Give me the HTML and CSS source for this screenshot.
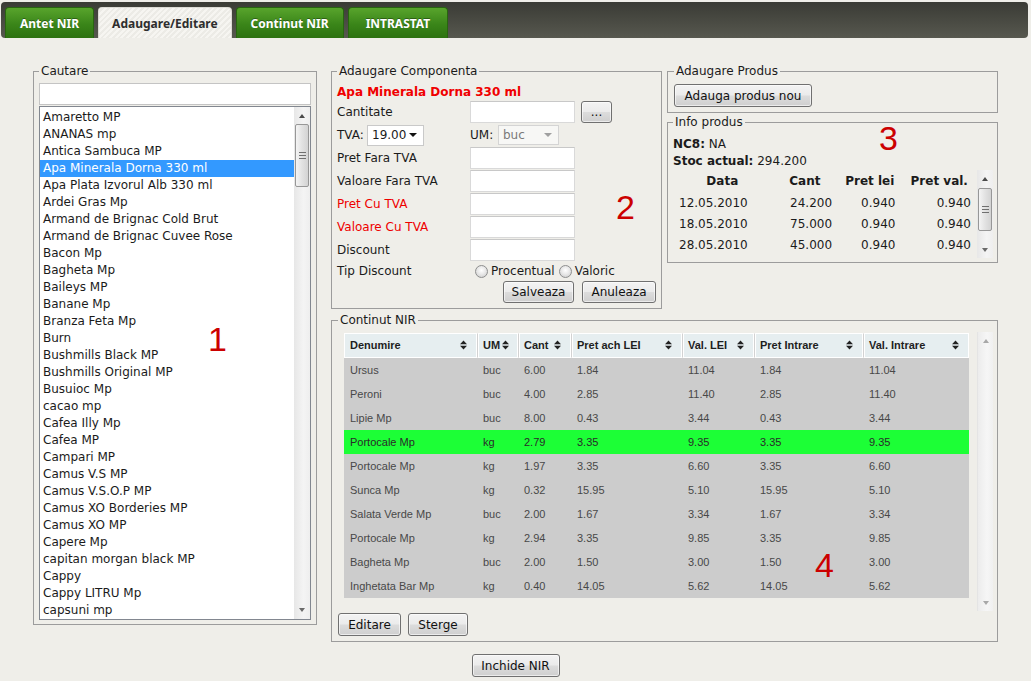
FILE: index.html
```html
<!DOCTYPE html>
<html lang="ro">
<head>
<meta charset="utf-8">
<title>NIR</title>
<link rel="stylesheet" href="styles.css">
</head>
<body>
<div class="tabbar">
  <div class="tab">Antet NIR</div>
  <div class="tab active">Adaugare/Editare</div>
  <div class="tab">Continut NIR</div>
  <div class="tab">INTRASTAT</div>
</div>

<div class="main">
  <fieldset class="box search">
    <legend>Cautare</legend>
    <div class="text search-input"></div>
    <div class="list">
      <ul class="items">
        <li>Amaretto MP</li>
        <li>ANANAS mp</li>
        <li>Antica Sambuca MP</li>
        <li class="sel">Apa Minerala Dorna 330 ml</li>
        <li>Apa Plata Izvorul Alb 330 ml</li>
        <li>Ardei Gras Mp</li>
        <li>Armand de Brignac Cold Brut</li>
        <li>Armand de Brignac Cuvee Rose</li>
        <li>Bacon Mp</li>
        <li>Bagheta Mp</li>
        <li>Baileys MP</li>
        <li>Banane Mp</li>
        <li>Branza Feta Mp</li>
        <li>Burn</li>
        <li>Bushmills Black MP</li>
        <li>Bushmills Original MP</li>
        <li>Busuioc Mp</li>
        <li>cacao mp</li>
        <li>Cafea Illy Mp</li>
        <li>Cafea MP</li>
        <li>Campari MP</li>
        <li>Camus V.S MP</li>
        <li>Camus V.S.O.P MP</li>
        <li>Camus XO Borderies MP</li>
        <li>Camus XO MP</li>
        <li>Capere Mp</li>
        <li>capitan morgan black MP</li>
        <li>Cappy</li>
        <li>Cappy LITRU Mp</li>
        <li>capsuni mp</li>
      </ul>
      <div class="vscroll list-scroll">
        <span class="sb-arrow up"></span>
        <span class="sb-thumb"><span class="grip"></span></span>
        <span class="sb-space"></span>
        <span class="sb-arrow down"></span>
      </div>
    </div>
  </fieldset>

  <div class="right">
    <div class="toprow">
      <fieldset class="box comp">
        <legend>Adaugare Componenta</legend>
        <div class="ftitle">Apa Minerala Dorna 330 ml</div>
        <div class="frow r-cant"><span class="flabel">Cantitate</span><span class="text field"></span><button class="btn btn-dots">...</button></div>
        <div class="frow r-tva">
          <span class="tva-label">TVA:</span>
          <span class="select tva-select">19.00<span class="caret"></span></span>
          <span class="um-label">UM:</span>
          <span class="select um-select">buc<span class="caret"></span></span>
        </div>
        <div class="frow"><span class="flabel">Pret Fara TVA</span><span class="text field"></span></div>
        <div class="frow"><span class="flabel">Valoare Fara TVA</span><span class="text field"></span></div>
        <div class="frow"><span class="flabel red">Pret Cu TVA</span><span class="text field"></span></div>
        <div class="frow"><span class="flabel red">Valoare Cu TVA</span><span class="text field"></span></div>
        <div class="frow"><span class="flabel">Discount</span><span class="text field"></span></div>
        <div class="frow r-tip">
          <span class="tip-label">Tip Discount</span>
          <span class="radio"></span><span class="rtext">Procentual</span>
          <span class="radio"></span><span class="rtext">Valoric</span>
        </div>
        <div class="frow r-btns">
          <button class="btn w-salv">Salveaza</button>
          <button class="btn w-anul">Anuleaza</button>
        </div>
      </fieldset>

      <div class="side">
        <fieldset class="box add">
          <legend>Adaugare Produs</legend>
          <button class="btn w-add">Adauga produs nou</button>
        </fieldset>
        <fieldset class="box info">
          <legend>Info produs</legend>
          <div class="iline"><b>NC8:</b> NA</div>
          <div class="iline"><b>Stoc actual:</b> 294.200</div>
          <div class="hist-wrap">
            <table class="hist">
              <colgroup><col class="h1"><col class="h2"><col class="h3"><col class="h4"></colgroup>
              <thead><tr><th>Data</th><th>Cant</th><th>Pret lei</th><th>Pret val.</th></tr></thead>
              <tbody>
                <tr><td>12.05.2010</td><td class="num">24.200</td><td class="num">0.940</td><td class="num">0.940</td></tr>
                <tr><td>18.05.2010</td><td class="num">75.000</td><td class="num">0.940</td><td class="num">0.940</td></tr>
                <tr><td>28.05.2010</td><td class="num">45.000</td><td class="num">0.940</td><td class="num">0.940</td></tr>
              </tbody>
            </table>
            <div class="vscroll hist-scroll">
              <span class="sb-arrow up"></span>
              <span class="sb-thumb"><span class="grip"></span></span>
              <span class="sb-space"></span>
              <span class="sb-arrow down"></span>
            </div>
          </div>
        </fieldset>
      </div>
    </div>

    <fieldset class="box nir">
      <legend>Continut NIR</legend>
      <div class="nir-area">
        <div class="grid-wrap">
          <table class="grid">
            <colgroup><col class="g1"><col class="g2"><col class="g3"><col class="g4"><col class="g5"><col class="g6"><col class="g7"></colgroup>
            <thead>
              <tr>
                <th><span>Denumire</span><svg class="sort" viewBox="0 0 7 10"><path d="M0 4.2 3.5 0.5 7 4.2Z M0 5.8 3.5 9.5 7 5.8Z"/></svg></th>
                <th class="th-um"><span>UM</span><svg class="sort" viewBox="0 0 7 10"><path d="M0 4.2 3.5 0.5 7 4.2Z M0 5.8 3.5 9.5 7 5.8Z"/></svg></th>
                <th><span>Cant</span><svg class="sort" viewBox="0 0 7 10"><path d="M0 4.2 3.5 0.5 7 4.2Z M0 5.8 3.5 9.5 7 5.8Z"/></svg></th>
                <th><span>Pret ach LEI</span><svg class="sort" viewBox="0 0 7 10"><path d="M0 4.2 3.5 0.5 7 4.2Z M0 5.8 3.5 9.5 7 5.8Z"/></svg></th>
                <th><span>Val. LEI</span><svg class="sort" viewBox="0 0 7 10"><path d="M0 4.2 3.5 0.5 7 4.2Z M0 5.8 3.5 9.5 7 5.8Z"/></svg></th>
                <th><span>Pret Intrare</span><svg class="sort" viewBox="0 0 7 10"><path d="M0 4.2 3.5 0.5 7 4.2Z M0 5.8 3.5 9.5 7 5.8Z"/></svg></th>
                <th><span>Val. Intrare</span><svg class="sort" viewBox="0 0 7 10"><path d="M0 4.2 3.5 0.5 7 4.2Z M0 5.8 3.5 9.5 7 5.8Z"/></svg></th>
              </tr>
            </thead>
            <tbody>
              <tr><td>Ursus</td><td>buc</td><td>6.00</td><td>1.84</td><td>11.04</td><td>1.84</td><td>11.04</td></tr>
              <tr><td>Peroni</td><td>buc</td><td>4.00</td><td>2.85</td><td>11.40</td><td>2.85</td><td>11.40</td></tr>
              <tr><td>Lipie Mp</td><td>buc</td><td>8.00</td><td>0.43</td><td>3.44</td><td>0.43</td><td>3.44</td></tr>
              <tr class="hl"><td>Portocale Mp</td><td>kg</td><td>2.79</td><td>3.35</td><td>9.35</td><td>3.35</td><td>9.35</td></tr>
              <tr><td>Portocale Mp</td><td>kg</td><td>1.97</td><td>3.35</td><td>6.60</td><td>3.35</td><td>6.60</td></tr>
              <tr><td>Sunca Mp</td><td>kg</td><td>0.32</td><td>15.95</td><td>5.10</td><td>15.95</td><td>5.10</td></tr>
              <tr><td>Salata Verde Mp</td><td>buc</td><td>2.00</td><td>1.67</td><td>3.34</td><td>1.67</td><td>3.34</td></tr>
              <tr><td>Portocale Mp</td><td>kg</td><td>2.94</td><td>3.35</td><td>9.85</td><td>3.35</td><td>9.85</td></tr>
              <tr><td>Bagheta Mp</td><td>buc</td><td>2.00</td><td>1.50</td><td>3.00</td><td>1.50</td><td>3.00</td></tr>
              <tr><td>Inghetata Bar Mp</td><td>kg</td><td>0.40</td><td>14.05</td><td>5.62</td><td>14.05</td><td>5.62</td></tr>
            </tbody>
          </table>
        </div>
        <div class="vscroll nir-scroll">
          <span class="sb-arrow up"></span>
          <span class="sb-space"></span>
          <span class="sb-arrow down"></span>
        </div>
      </div>
      <div class="nir-btns">
        <button class="btn w-edit">Editare</button>
        <button class="btn w-sterge">Sterge</button>
      </div>
    </fieldset>
  </div>
</div>

<div class="footer"><button class="btn w-close">Inchide NIR</button></div>

<span class="mark m1">1</span>
<span class="mark m2">2</span>
<span class="mark m3">3</span>
<span class="mark m4">4</span>
</body>
</html>
```

FILE: styles.css
```css
* { box-sizing: border-box; }

body {
  margin: 0;
  background: #efeee9;
  font-family: "DejaVu Sans", Verdana, sans-serif;
  font-size: 12px;
  color: #1b1b1b;
  position: relative;
  height: 681px;
  overflow: hidden;
}

/* ---------- tabs ---------- */
.tabbar {
  display: flex;
  align-items: flex-end;
  gap: 4px;
  height: 36px;
  margin: 2px 3px 0 1px;
  padding-left: 4px;
  background: linear-gradient(#3a3b35, #57584f);
  border-radius: 4px;
}
.tab {
  height: 31px;
  padding: 0 14px;
  display: flex;
  align-items: center;
  font-family: "Noto Sans", sans-serif;
  font-weight: bold;
  font-size: 12px;
  color: #fff;
  text-shadow: 0 -1px 0 rgba(0,0,0,.35);
  background: linear-gradient(#58a42c, #3a8519 55%, #2d7210);
  border: 1px solid #28650f;
  border-bottom: none;
  border-radius: 4px 4px 0 0;
}
.tab:last-child { padding: 0 17px; }
.tab.active {
  padding: 0 13px;
  color: #2e2e2e;
  text-shadow: none;
  background: repeating-linear-gradient(135deg, #f6f5f1 0 2px, #ecebe6 2px 4px);
  border-color: #dcdbd4;
}

/* ---------- layout ---------- */
.main {
  display: flex;
  align-items: flex-start;
  gap: 14px;
  padding: 26px 0 0 33px;
}
fieldset.box {
  margin: 0;
  min-width: 0;
  border: 1px solid #9c9c9c;
}
.box legend {
  padding: 0 2px;
  line-height: 14px;
  font-size: 12px;
  color: #1b1b1b;
}
.right {
  display: flex;
  flex-direction: column;
  width: 667px;
}
.toprow {
  display: flex;
  align-items: flex-start;
  gap: 5px;
}
.side {
  display: flex;
  flex-direction: column;
  gap: 2px;
  width: 331px;
}

/* ---------- inputs & buttons ---------- */
.text {
  display: block;
  background: #fff;
  border: 1px solid #d9d9d9;
  border-top-color: #c8c8c8;
}
.btn {
  height: 23px;
  padding: 0 6px;
  font-family: "DejaVu Sans", Verdana, sans-serif;
  font-size: 12px;
  color: #111;
  border: 1px solid #707070;
  border-radius: 3px;
  background: linear-gradient(#f3f3f3 0%, #ebebeb 48%, #dcdcdc 52%, #cfcfcf 100%);
  box-shadow: inset 0 0 0 1px rgba(255,255,255,.6);
}

/* ---------- search ---------- */
.search {
  width: 284px;
  padding: 5px 5px 4px 5px;
}
.search-input {
  height: 22px;
  margin-bottom: 1px;
  border-color: #c4c4c4;
}
.list {
  display: flex;
  height: 514px;
  border: 1px solid #828790;
  background: #fff;
}
.items {
  flex: 1;
  margin: 0;
  padding: 2px 0 0;
  list-style: none;
  overflow: hidden;
}
.items li {
  height: 17px;
  line-height: 17px;
  padding-left: 3px;
  white-space: nowrap;
  color: #1b1b1b;
}
.items li.sel {
  background: #3399ff;
  color: #fff;
}

/* ---------- scrollbars ---------- */
.vscroll {
  width: 16px;
  display: flex;
  flex-direction: column;
  background: linear-gradient(90deg, #e7e7e7, #f4f4f4 60%, #eeeeee);
}
.sb-arrow {
  height: 17px;
  flex: none;
  display: flex;
  align-items: center;
  justify-content: center;
}
.sb-arrow::before {
  content: "";
  border-left: 3px solid transparent;
  border-right: 3px solid transparent;
}
.sb-arrow.up::before { border-bottom: 4px solid #4a4a4a; }
.sb-arrow.down::before { border-top: 4px solid #6a6a6a; }
.sb-thumb {
  flex: none;
  margin: 0 1px;
  border: 1px solid #979797;
  border-radius: 2px;
  background: linear-gradient(90deg, #f4f4f4, #e2e2e2 50%, #d3d3d3);
  display: flex;
  align-items: center;
  justify-content: center;
}
.grip {
  width: 7px;
  height: 7px;
  background: repeating-linear-gradient(#6f6f6f 0 1px, transparent 1px 3px);
}
.sb-space { flex: 1; }
.list-scroll .sb-thumb { height: 63px; }
.list-scroll .sb-arrow.down { height: 19px; }

/* ---------- componenta ---------- */
.comp {
  width: 331px;
  padding: 6px 5px 5px 5px;
}
.ftitle {
  line-height: 16px;
  font-weight: bold;
  color: #f00000;
}
.frow {
  display: flex;
  align-items: center;
  height: 23px;
}
.flabel { width: 133px; }
.red { color: #ee0000; }
.field { width: 105px; height: 22px; }
.r-cant { height: 24px; }
.btn-dots {
  width: 31px;
  height: 22px;
  margin-left: 6px;
  padding: 0;
  line-height: 14px;
}
.r-tva { height: 22px; }
.tva-label { width: 30px; }
.select {
  display: flex;
  align-items: center;
  justify-content: space-between;
  height: 21px;
  padding: 0 6px 0 4px;
  background: #fff;
  border: 1px solid #c9c9c9;
}
.caret {
  border-left: 4px solid transparent;
  border-right: 4px solid transparent;
  border-top: 4px solid #111;
}
.tva-select { width: 57px; }
.um-label { margin-left: 46px; width: 28px; }
.um-select {
  width: 61px;
  height: 20px;
  color: #7a7a7a;
  background: #f7f7f5;
  border-color: #d4d4d4;
}
.um-select .caret { border-top-color: #a0a0a0; }
.r-tip { height: 20px; }
.tip-label { width: 138px; }
.radio {
  width: 13px;
  height: 13px;
  border-radius: 50%;
  border: 1px solid #8e8f8f;
  background: radial-gradient(circle at 50% 40%, #ffffff 0, #e9e9e9 45%, #c9c9c9 100%);
}
.rtext { margin: 0 4px 0 3px; }
.r-btns {
  height: 22px;
  justify-content: flex-end;
  gap: 8px;
}
.r-btns .btn { height: 22px; }
.w-salv { width: 71px; }
.w-anul { width: 74px; }

/* ---------- adaugare produs / info ---------- */
.add { padding: 6px 5px 5px 6px; }
.w-add { width: 138px; }
.info { padding: 7px 4px 4px 5px; }
.iline { line-height: 17px; }
.hist-wrap {
  display: flex;
  height: 88px;
}
.hist {
  flex: 1;
  align-self: flex-start;
  border-collapse: collapse;
  table-layout: fixed;
  font-size: 12px;
}
.hist .h1 { width: 98px; }
.hist .h2 { width: 66px; }
.hist .h3 { width: 63px; }
.hist .h4 { width: 75px; }
.hist th {
  height: 22px;
  padding: 0;
  font-weight: bold;
  text-align: center;
}
.hist td {
  height: 21px;
  padding: 0 6px;
  white-space: nowrap;
}
.hist td.num { text-align: right; }
.hist-scroll { width: 16px; }
.hist-scroll .sb-thumb { height: 43px; margin-top: 1px; }

/* ---------- continut nir ---------- */
fieldset.box.nir {
  margin-top: 4px;
  width: 667px;
  padding: 5px 4px 5px 6px;
}
.nir-area {
  display: flex;
  gap: 8px;
  height: 279px;
}
.grid-wrap {
  width: 625px;
  margin: 1px 0 0 6px;
  align-self: flex-start;
  background: #cccccc;
}
.grid {
  width: 625px;
  border-collapse: separate;
  border-spacing: 0;
  table-layout: fixed;
  font-family: "Liberation Sans", Arial, sans-serif;
  font-size: 11px;
}
.g1 { width: 133px; }
.g2 { width: 41px; }
.g3 { width: 53px; }
.g4 { width: 111px; }
.g5 { width: 72px; }
.g6 { width: 109px; }
.g7 { width: 106px; }
.grid th {
  height: 25px;
  padding: 0 9px 0 5px;
  background: #e6eef0;
  border: 1px solid #fff;
  font-weight: bold;
  color: #1e1e1e;
  text-align: left;
}
.grid th + th {
  border-left: 1px solid #d2d2d2;
  box-shadow: inset 1px 0 0 #fff;
}
.grid th span { float: left; line-height: 23px; }
.grid th .sort {
  float: right;
  width: 7px;
  height: 10px;
  margin-top: 6px;
  fill: #222;
}
.grid th.th-um { padding-right: 2px; }
.grid th.th-um .sort { float: left; margin-left: 2px; }
.grid td {
  height: 24px;
  padding: 0 0 0 6px;
  color: #484848;
  white-space: nowrap;
}
.grid tr.hl td { background: #1cff36; color: #2a2a2a; }
.nir-scroll {
  background: linear-gradient(90deg, #ececec, #f6f6f6 60%, #f0f0f0);
  border-left: 1px solid #e4e4e4;
}
.nir-scroll .sb-arrow.up::before { border-bottom-color: #a8a8a8; }
.nir-scroll .sb-arrow.down::before { border-top-color: #a8a8a8; }
.nir-btns {
  display: flex;
  gap: 7px;
  margin-top: 2px;
}
.w-edit { width: 63px; }
.w-sterge { width: 60px; }

/* ---------- footer ---------- */
.footer {
  display: flex;
  justify-content: center;
  margin-top: 12px;
}
.w-close { width: 88px; }

/* ---------- red annotations ---------- */
.mark {
  position: absolute;
  font-family: "Liberation Sans", Arial, sans-serif;
  font-size: 34px;
  line-height: 34px;
  color: #cc0000;
}
.m1 { left: 208px; top: 322px; }
.m2 { left: 616px; top: 190px; }
.m3 { left: 879px; top: 121px; }
.m4 { left: 815px; top: 548px; }
```
